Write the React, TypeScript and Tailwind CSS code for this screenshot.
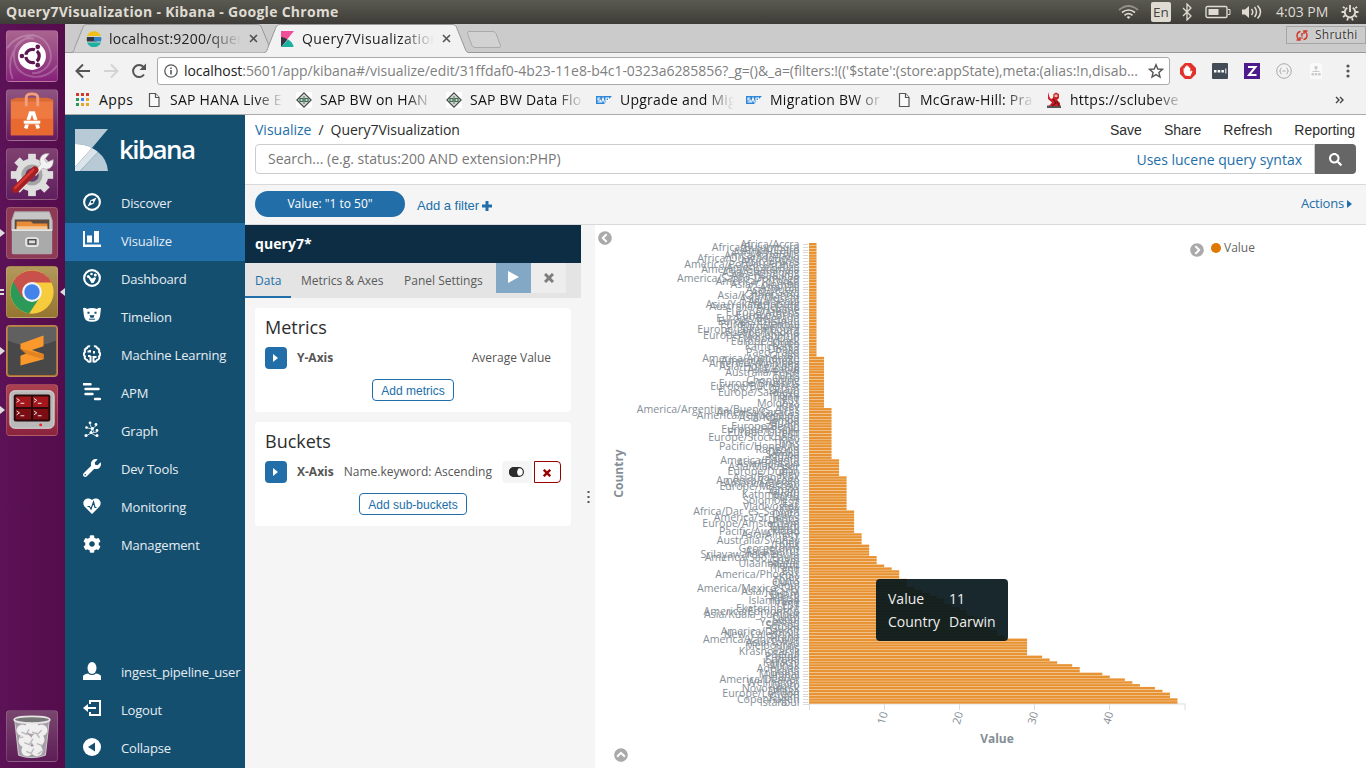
import React from "react";
import { FaChevronCircleLeft, FaChevronCircleRight, FaChevronCircleUp, FaCog, FaSearch, FaWrench } from "react-icons/fa";

/* ---------- chart data ---------- */

const runs: [number, number][] = [
  [1, 40], [2, 18], [3, 18], [4, 6], [5, 12], [6, 8], [7, 4], [8, 4], [9, 3], [10, 1], [11, 1], [12, 3],
  [13, 3], [14, 1], [15, 1], [16, 1], [17, 1], [18, 2], [19, 1], [20, 1], [21, 2], [22, 1], [23, 2], [24, 2], [25, 2], [26, 1],
  [29, 6], [31, 1], [32, 1], [33, 1], [35, 1], [36, 2], [39, 1], [40, 1], [42, 1], [43, 1], [44, 1], [46, 1], [47, 1], [48, 2], [49, 2],
];
const values = runs.flatMap(([v, n]) => Array<number>(n).fill(v));

const longNames: Record<number, string> = {
  0: "Africa/Accra", 1: "Africa/Bujumbura", 2: "Africa/Cairo", 3: "Africa/Harare", 4: "Africa/Kampala", 5: "Africa/Ouagadougou",
  6: "Africa/Tunis", 7: "America/Port-au-Prince", 8: "America/Belize", 9: "America/Guatemala", 10: "Asia/Chongqing", 11: "America/Lima",
  12: "America/Santo_Domingo", 13: "America/Toronto", 14: "Asia/Colombo", 15: "Asia/Dili", 16: "Asia/Dubai", 17: "Asia/Gaza",
  18: "Asia/Kathmandu", 19: "Asia/Muscat", 20: "Asia/Seoul", 21: "Asia/Yekaterinburg", 22: "Australia/Adelaide", 23: "Brisbane",
  24: "Europe/Athens", 25: "Europe/Brno", 26: "Europe/Belgrade", 27: "Europe/Chisinau", 28: "Europe/Istanbul", 29: "Europe/Kiev",
  30: "Europe/Luxembourg", 31: "Europe/Madrid", 32: "Europe/Mariehamn", 33: "Europe/Oslo", 34: "Europe/Minsk", 36: "Kamchatka",
  38: "Pago_Pago", 40: "America/Anchorage", 41: "America/Juneau", 42: "America/Winnipeg", 43: "Asia/Hong_Kong", 44: "Asia/Kabul",
  45: "Australia/Perth", 48: "Chongqing", 49: "Europe/Brussels", 50: "Europe/Bucharest", 52: "Europe/Sarajevo", 56: "Moldova",
  58: "America/Argentina/Buenos_Aires", 59: "America/Caracas", 60: "America/Tegucigalpa", 61: "Asia/Kolkata", 64: "Europe/Berlin",
  65: "Europe/Helsinki", 66: "Europe/Dublin", 68: "Europe/Stockholm", 71: "Pacific/Honolulu", 72: "Rangoon", 76: "America/Bogota",
  77: "Asia/Bahrain", 78: "Asia/Makassar", 80: "Europe/Dublin", 82: "Asia/Bangkok", 83: "America/Chicago", 84: "America/Belem",
  85: "Europe/Moscow", 88: "Kathmandu", 90: "Solomon_Is", 92: "Vladivostok", 94: "Africa/Dar_es_Salaam", 96: "America/St_Johns",
  98: "Europe/Amsterdam", 101: "Pacific/Auckland", 102: "Asia/Almaty", 104: "Australia/Sydney", 107: "Georgetown",
  108: "Asia/Beirut", 109: "Srilayawardenepura", 110: "America/Sao_Paulo", 112: "Ulaanbaatar", 116: "America/Phoenix",
  121: "America/Mexico_City", 122: "Asia/Jakarta", 125: "Islamabad", 128: "Ekaterinburg", 129: "America/Edmonton",
  130: "Asia/Kuala_Lumpur", 133: "Yerevan", 136: "America/Detroit", 137: "New_Caledonia", 139: "America/Vancouver",
  140: "Asia/Tokyo", 141: "Melbourne", 143: "Krasnoyarsk", 145: "Prague", 147: "Karachi", 149: "Adelaide", 151: "Mumbai",
  153: "America/Denver", 154: "Wellington", 156: "Novosibirsk", 158: "Europe/London", 160: "Copenhagen", 161: "Istanbul",
};
const shortNames = ["Seoul", "Dhaka", "Samoa", "Guam", "Minsk", "Perth", "Tirana", "EST", "Hanoi", "Kiev", "Tunis", "Quito"];
const labels = values.map((_, i) => longNames[i] ?? shortNames[i % shortNames.length]);

const TOP = 243;
const STEP = 461 / 162;
const LEFT = 809;
const UNIT = 7.52;

function Chart() {
  return (
    <svg className="block h-[543px] w-[595px]" viewBox="595 225 595 543" fontFamily="'Open Sans','Noto Sans',sans-serif">
      <g fill="#848e96" fontSize="10.600" textAnchor="end">
        {labels.map((l, i) => (
          <text key={i} x="799.5" y={TOP + (i + 0.5) * STEP + 3.4}>{l}</text>
        ))}
      </g>
      <g stroke="#d8d8d8" strokeWidth="1">
        {values.map((_, i) => (
          <line key={i} x1="803" x2="808" y1={Math.floor(TOP + (i + 0.5) * STEP) + 0.5} y2={Math.floor(TOP + (i + 0.5) * STEP) + 0.5} />
        ))}
      </g>
      <path d="M803 704.5h6M809.5 704v6M884.5 704v6M959.5 704v6M1034.5 704v6M1109.5 704v6M1185 704v6M809 704h376.500" fill="none" stroke="#ddd" />
      <g fill="#e58a22" fillOpacity="0.92">
        {values.map((v, i) => (
          <rect key={i} x={LEFT} y={TOP + i * STEP} width={v * UNIT} height={STEP - 0.35} />
        ))}
      </g>
      <g fill="#848e96" fontSize="11" textAnchor="middle">
        {[10, 20, 30, 40].map((n) => (
          <text key={n} transform={`translate(${LEFT + n * UNIT + 2} 719) rotate(-75)`}>{n}</text>
        ))}
      </g>
      <g fill="#848e96" fontSize="12" fontWeight="700" textAnchor="middle">
        <text x="997" y="743">Value</text>
        <text transform="translate(623 473.500) rotate(-90)">Country</text>
      </g>
    </svg>
  );
}

/* ---------- launcher ---------- */

function Tile({ bg, children, mark, active }: { bg: string; children: React.ReactNode; mark?: "one" | "two"; active?: boolean }) {
  return (
    <div className="flex h-[59px] w-[65px] items-center">
      <span className="flex w-[6px] flex-col gap-[2px]">
        {mark === "one" && <svg className="h-[8px] w-[5px]" viewBox="0 0 5 8"><path d="M0 0l5 4-5 4z" fill="#ddd" /></svg>}
        {mark === "two" && <><i className="h-[2px] w-[4px] bg-[#ddd]" /><i className="h-[2px] w-[4px] bg-[#ddd]" /></>}
      </span>
      <span className={`h-[52px] w-[52px] overflow-hidden rounded-[4px] border border-white/15 ${bg}`}>
        <svg viewBox="0 0 52 52" className="h-[50px] w-[50px]">{children}</svg>
      </span>
      <span className="flex flex-1 justify-end">
        {active && <svg className="h-[8px] w-[5px]" viewBox="0 0 5 8"><path d="M5 0L0 4l5 4z" fill="#ddd" /></svg>}
      </span>
    </div>
  );
}

function Launcher() {
  return (
    <aside className="flex w-[65px] flex-none flex-col justify-between bg-linear-to-r from-[#5c1256] to-[#540c4b] pt-[2px] pb-[3px]">
      <div>
        <Tile bg="bg-linear-to-b from-[#a9648f] to-[#87207a]">
          <g fill="none" stroke="#fff" strokeOpacity=".22" strokeWidth="2">
            <path d="M0 18C10 2 36-2 44 18c6 16-6 26-18 26M52 36C40 54 12 50 8 32 4 14 16 6 28 8M6 50C-2 30 8 10 28 4" />
          </g>
          <circle cx="26" cy="26" r="14.500" fill="#fff" />
          <circle cx="26.500" cy="26" r="7" fill="none" stroke="#5f1750" strokeWidth="3.400" strokeDasharray="12.200 2.460" strokeDashoffset="-8.500" />
          <g fill="#5f1750"><circle cx="15.500" cy="26" r="2.400" /><circle cx="32" cy="16.500" r="2.400" /><circle cx="32" cy="35.500" r="2.400" /></g>
        </Tile>
        <Tile bg="bg-linear-to-b from-[#8e5480] to-[#651a5b]">
          <path d="M4 10l6-2h32l6 2v4H4z" fill="#d96a35" />
          <path d="M4 12h44v35H4z" fill="#ee7a42" />
          <path d="M4 30h44v17H4z" fill="#e96a30" />
          <path d="M20 17V8q0-4 6-4t6 4v9" fill="none" stroke="#f0a07a" strokeWidth="3" />
          <path d="M19.500 40l5-16h3l5 16" fill="none" stroke="#fff" strokeWidth="3.800" />
          <rect x="17" y="31.500" width="18" height="4" rx="1.500" fill="#fff" stroke="#ea6c32" strokeWidth=".8" />
        </Tile>
        <Tile bg="bg-linear-to-b from-[#80406f] to-[#5f1e5e]">
          <g fill="#dedede">
            <circle cx="26" cy="27" r="17" />
            {[0, 45, 90, 135].map((a) => <rect key={a} x="22" y="5" width="8" height="44" transform={`rotate(${a} 26 27)`} />)}
          </g>
          <circle cx="26" cy="27" r="11" fill="#a5a5a5" /><circle cx="26" cy="27" r="7" fill="#6b3766" />
          <path d="M28 24l7-8c-3-6 2-13 9-11l-5 6 2 3 7-3c1 8-5 12-11 9l-7 8z" fill="#f2f2f2" stroke="#999" strokeWidth=".6" />
          <path d="M9 42l20-20" stroke="#a61e22" strokeWidth="7.500" strokeLinecap="round" />
          <path d="M8.500 40.500l19-19" stroke="#d63a37" strokeWidth="2.500" strokeLinecap="round" />
        </Tile>
        <Tile bg="bg-[#8d3a56]" mark="one">
          <path d="M8 4h36l3 9v10H5V13z" fill="#c6c6c6" stroke="#aaa" /><path d="M8 12h36v12H8z" fill="#5c4b42" />
          <path d="M10 14h15l2 2h15v8H10z" fill="#e98c38" /><path d="M10 19h32v4H10z" fill="#f6c58e" />
          <path d="M5 22h42v25q0 1-2 1H7q-2 0-2-1z" fill="#aaa" /><path d="M5 22h42v2H5z" fill="#e4e4e4" />
          <rect x="19.500" y="31" width="13" height="9" rx="2" fill="#ddd" stroke="#eee" /><rect x="22" y="33" width="8" height="4.500" fill="#ddd" stroke="#444" strokeWidth="1.400" />
        </Tile>
        <Tile bg="bg-linear-to-b from-[#b3985c] to-[#95752f]" mark="two" active>
          <circle cx="26" cy="26" r="22.500" fill="#f6cb3c" />
          <path d="M26 26L6.500 15A22.500 22.500 0 0 0 23 48.300l10-15z" fill="#2b9957" />
          <path d="M26 16h20.200A22.500 22.500 0 0 0 6.500 15L16 32z" fill="#c9514b" />
          <circle cx="26" cy="26" r="10.300" fill="#f3f3f3" /><circle cx="26" cy="26" r="8" fill="#4383ea" />
        </Tile>
        <Tile bg="bg-linear-to-b from-[#b5793d] to-[#ad7333]" mark="one">
          <rect x="1" y="1" width="50" height="50" rx="3" fill="#484848" /><path d="M1 1h50v14Q26 26 1 15z" fill="#606060" />
          <path d="M14 18.500l24-8.500v11l-12 4 12 4v5.500L14 41V31l10-4-10-3z" fill="#fb982c" />
          <path d="M14 24l24 5.500v5L20 29z" fill="#e08322" />
        </Tile>
        <Tile bg="bg-linear-to-b from-[#aa4150] to-[#8b233f]" mark="one">
          <rect x="3" y="6" width="46" height="39" rx="5" fill="#b9b9b9" stroke="#e0e0e0" /><rect x="7" y="10" width="38" height="28" rx="2" fill="#29090b" />
          <g fill="#a2161c"><path d="M9 12h16v11H9zM27 12h16v11H27z" /></g>
          <g fill="#7c0d12"><path d="M9 25h16v11H9zM27 25h16v11H27z" /></g>
          <g fill="none" stroke="#eee"><path d="M10 14l3 2-3 2m4 1h4M28 14l3 2-3 2m4 1h4M10 27l3 2-3 2m4 1h4M28 27l3 2-3 2m4 1h4" /></g>
          <circle cx="35" cy="41.500" r="1.500" fill="#e22" />
        </Tile>
      </div>
      <Tile bg="bg-linear-to-b from-[#79466f] to-[#5e1c57]">
        <path d="M8 9h36l-4 37q-14 5-28 0z" fill="#a79da6" stroke="#ccc" />
        <g fill="#efefef"><circle cx="16" cy="20" r="6" /><circle cx="26" cy="17" r="7" /><circle cx="36" cy="20" r="6" /><circle cx="19" cy="31" r="7" /><circle cx="32" cy="30" r="7" /><circle cx="21" cy="41" r="6" /><circle cx="31" cy="41" r="6" /></g>
        <path d="M15 22l5 2 3-5m3 3l6 2 4-4m-18 13l5 2 4-6m4 5l6 2m-17 6l5 2 3-5m4 6l4-3M13 28l4-1m14-3l3 4" fill="none" stroke="#b9b9b9" strokeWidth="1.400" />
        <ellipse cx="26" cy="9" rx="18.500" ry="3.500" fill="#777" stroke="#e5e5e5" strokeWidth="1.800" />
      </Tile>
    </aside>
  );
}

/* ---------- browser chrome ---------- */

function SystemBar() {
  return (
    <header className="flex h-6 flex-none items-center bg-linear-to-b from-[#5b5a51] to-[#3d3c38] pl-[6px] text-[#dfdbd2]">
      <span className="flex-1 pb-[2px] text-[14px] font-bold tracking-[0.290px]">Query7Visualization - Kibana - Google Chrome</span>
      <svg className="h-[18px] w-[21px]" viewBox="0 0 21 18" fill="none" stroke="#dfdbd2" strokeWidth="1.700"><path d="M1 7Q10.500-1 20 7" opacity=".45" /><path d="M4 9.500q6.500-5 13 0M6.500 12.300q4-3.200 8 0" /><path d="M8.500 14l2 2 2-2q-2-1.500-4 0z" fill="#dfdbd2" stroke="none" /></svg>
      <span className="ml-[12px] flex h-5 w-5 items-center justify-center rounded-[2px] bg-[#dfdbd2] text-[13.500px] text-[#45443f]">En</span>
      <svg className="ml-[10px] h-[18px] w-[12px]" viewBox="0 0 12 18" fill="none" stroke="#dfdbd2" strokeWidth="1.300"><path d="M2 5l8 8-4 4V1l4 4-8 8" /></svg>
      <svg className="ml-[12px] h-[14px] w-[26px]" viewBox="0 0 26 14"><rect x="1" y="1.500" width="21" height="11" rx="1.500" fill="none" stroke="#dfdbd2" strokeWidth="1.400" /><path d="M3.500 4h10v6h-10z" fill="#dfdbd2" /><path d="M23 4.500h2v5h-2" fill="none" stroke="#dfdbd2" /></svg>
      <svg className="ml-[10px] h-[18px] w-[21px]" viewBox="0 0 21 18" fill="none" stroke="#dfdbd2" strokeWidth="1.500"><path d="M1 6.500h3l4-3.500v12l-4-3.500H1z" fill="#dfdbd2" stroke="none" /><path d="M10.500 6q2.500 3 0 6M13.500 4q4 5 0 10M16.500 2.500q6 6.500 0 13" /></svg>
      <span className="ml-[14px] w-[54px] pb-px text-[14px] whitespace-nowrap">4:03 PM</span>
      <svg className="mr-[7px] ml-[11px] h-[18px] w-[18px]" viewBox="0 0 18 18" fill="none" stroke="#dfdbd2"><path d="M6.300 4.800a5.200 5.200 0 1 0 5.400 0M9 2v7" strokeWidth="1.900" /><path d="M3.800 5L1.800 4M3 9H.5M4 12.500l-2 1.500M7 15l-.8 2.500M11 15l.8 2.500M14 12.500l2 1.500M15 9h2.500M14.200 5l2-1" strokeWidth="1.800" /></svg>
    </header>
  );
}

function CloseX() {
  return <svg className="h-[9px] w-[9px]" viewBox="0 0 9 9"><path d="M1 1l7 7M8 1L1 8" stroke="#555" strokeWidth="1.600" /></svg>;
}

const fade = "overflow-hidden whitespace-nowrap [mask-image:linear-gradient(to_right,#000_75%,transparent_100%)]";

function TabStrip() {
  return (
    <div className="relative flex h-[29px] flex-none items-start bg-[#cbcbcb] text-[14px] text-[#222]">
      <svg className="absolute inset-0 h-[29px] w-[1301px]" viewBox="65 24 1301 29" fill="none" stroke="#999">
        <path d="M65 52.500H1366" />
        <path d="M71 52.500c3 0 3-3 4.500-7l7-17c1-3 2-4 5-4H257c3 0 4 1 5 4l7 17c1 4 2 7 5 7" fill="#d2d2d2" />
        <path d="M264 53c3-1 3-3 4.500-7l7-17.500c1-3 2-4 5-4H452c3 0 4 1 5 4l7 17.500c1.500 4 2 6 5 7" fill="#f2f2f2" />
        <path d="M469 31.500h24q2 0 3 2l4.500 12q.5 2-1.500 2h-24q-2 0-3-2l-4.500-12q-.5-2 1.500-2z" fill="#d2d2d2" stroke="#aaa" />
      </svg>
      <div className="relative flex h-[29px] items-center pl-[21px]">
        <svg className="h-4 w-4" viewBox="0 0 16 16"><path d="M1 5a7.500 7.500 0 0 1 14 0z" fill="#f0bf1a" /><path d="M1 6h9a2 2 0 0 1 0 4.500H1A8 8 0 0 1 1 6z" fill="#343741" /><path d="M8 6h7q1 2 0 4.500H8z" fill="#3185c4" /><path d="M1 11.500h14a7.500 7.500 0 0 1-14 0z" fill="#1db0a0" /></svg>
        <span className={`ml-[7px] w-[132px] tracking-[0.200px] ${fade}`}>localhost:9200/query7</span>
        <span className="ml-[8px]"><CloseX /></span>
      </div>
      <div className="relative flex h-[29px] items-center pl-[23px]">
        <svg className="h-4 w-[13px]" viewBox="0 0 13 16"><path d="M0 0h13L0 16z" fill="#f04e98" /><path d="M0 6q4 0 6.500 2.500L0 16z" fill="#343741" /><path d="M7 8.500Q12 11 12.500 16H0z" fill="#1db0a0" /></svg>
        <span className={`ml-[8px] w-[132px] tracking-[0.380px] ${fade}`}>Query7Visualization</span>
        <span className="ml-[8px]"><CloseX /></span>
      </div>
      <div className="relative mt-[2px] ml-auto flex h-[18px] w-[80px] items-center border border-[#a5a5a5] pl-[8px] text-[12px] text-[#333]">
        <svg className="h-[13px] w-[14px]" viewBox="0 0 14 13" fill="none" stroke="#d03b2c" strokeWidth="1.500"><path d="M5.500 2.500Q2 3 2 7q0 2 2 3.500M1.500 11H5V8M8.500 10.500Q12 10 12 6q0-2-2-3.500M12.500 2H9v3M7 4v3.500M7 8.500v1.300" /></svg>
        <span className="ml-[6px] tracking-[0.250px] [text-shadow:0_0_2px_#fff]">Shruthi</span>
      </div>
    </div>
  );
}

function Toolbar() {
  return (
    <div className="flex h-[35px] flex-none items-center bg-[#f2f2f2] text-[14px]">
      <svg className="ml-[9px] h-[18px] w-[18px]" viewBox="0 0 18 18" fill="none" stroke="#555" strokeWidth="2"><path d="M16 9H3M9 2.500L2.500 9 9 15.500" /></svg>
      <svg className="ml-[10px] h-[18px] w-[18px]" viewBox="0 0 18 18" fill="none" stroke="#d3d3d3" strokeWidth="2"><path d="M2 9h13M9 2.500L15.500 9 9 15.500" /></svg>
      <svg className="ml-[10px] h-[18px] w-[18px]" viewBox="0 0 18 18" fill="none" stroke="#555" strokeWidth="2"><path d="M14 12.500A6 6 0 1 1 13.500 5" /><path d="M16 1.500v6.500h-6.500z" fill="#555" stroke="none" /></svg>
      <div className="ml-[9px] flex h-[28px] w-[1013px] items-center rounded-[3px] border border-[#aaa] bg-white pl-[6px]">
        <svg className="h-[14px] w-[14px]" viewBox="0 0 14 14"><circle cx="7" cy="7" r="6.200" fill="none" stroke="#5a5a5a" strokeWidth="1.300" /><path d="M6.200 6h1.600v4.500H6.200zM6.200 3.400h1.600V5H6.200z" fill="#5a5a5a" /></svg>
        <span className="ml-[6px] w-[958px] pb-px tracking-[-0.045px] whitespace-nowrap text-[#808080]"><span className="text-[#222]">localhost</span>:5601/app/kibana#/visualize/edit/31ffdaf0-4b23-11e8-b4c1-0323a6285856?_g=()&amp;_a=(filters:!(('$state':(store:appState),meta:(alias:!n,disab...</span>
        <svg className="ml-[6px] h-4 w-4" viewBox="0 0 16 16"><path d="M8 1.700l1.800 4.300 4.700.4-3.600 3.100 1.100 4.600-4-2.500-4 2.500 1.100-4.600L1.500 6.400 6.200 6z" fill="none" stroke="#555" strokeWidth="1.400" /></svg>
      </div>
      <div className="ml-[10px] flex items-center gap-4">
        <svg className="h-4 w-4" viewBox="0 0 16 16"><path d="M5 0h6l5 5v6l-5 5H5l-5-5V5z" fill="#e0322a" /><path d="M5 12.500L3.600 9V5.200h1.300V3.500h1.400V2.500h1.400v1h1.400v1.300h1.200v4l1.300-1.300.9.700-2.200 5.100z" fill="#fff" /></svg>
        <svg className="h-4 w-4" viewBox="0 0 16 16"><rect width="16" height="16" rx="1" fill="#414c58" /><path d="M2 7h2.500v2.500H2zM5.700 7h2.500v2.500H5.700zM9.400 7h2.500v2.500H9.400zM13.300 5.500h1v5h-1z" fill="#fff" /></svg>
        <svg className="h-4 w-4" viewBox="0 0 16 16"><path d="M0 0h16v16H0z" fill="#4d1c8c" /><path d="M4 4h7.500L5 12h7.500" fill="none" stroke="#fff" strokeWidth="2" /></svg>
        <svg className="h-4 w-4" viewBox="0 0 16 16" fill="none" stroke="#aaa"><circle cx="8" cy="8" r="7.300" /><path d="M5.500 5q-1 0-1 1.500T3.500 8q1 0 1 1.500t1 1.500M10.500 5q1 0 1 1.500t1 1.500q-1 0-1 1.500t-1 1.500M6.500 8h3" /></svg>
        <svg className="h-4 w-4" viewBox="0 0 16 16"><rect x="2" width="12" height="16" rx="2" fill="#fafafa" /><path d="M6.500 3h3v3h-3zM3.500 10H6v2.500H3.500zM6.800 10h2.500v2.500H6.800zM10.200 10h2.500v2.500h-2.500zM4.500 8h7v1h-7zM7.500 6h1v2h-1z" fill="#ccc" /></svg>
        <svg className="h-4 w-4" viewBox="0 0 16 16" fill="#555"><circle cx="8" cy="3" r="1.600" /><circle cx="8" cy="8" r="1.600" /><circle cx="8" cy="13" r="1.600" /></svg>
      </div>
    </div>
  );
}

function DocIcon() {
  return <svg className="h-4 w-4" viewBox="0 0 16 16" fill="#fafafa" stroke="#555" strokeWidth="1.200"><path d="M3.500 1.500h6l3.500 4v9H3.500z" /><path d="M9.500 1.500v4H13" /></svg>;
}
function DiamondIcon() {
  return <svg className="h-4 w-4" viewBox="0 0 16 16"><rect width="16" height="16" fill="#fff" /><path d="M8 .8L15.200 8 8 15.200.8 8z" fill="#cfdad2" stroke="#444" strokeWidth="1.100" /><path d="M4 6.500h3v3H4zM9 6.500h3v3H9z" fill="none" stroke="#3c7050" strokeWidth="1.200" /><path d="M8 4v8" stroke="#666" /></svg>;
}
function SapIcon() {
  return <svg className="h-4 w-4" viewBox="0 0 16 16"><path d="M0 4h16l-8 8H0z" fill="#2c85d8" /><path d="M4.300 6H2v2h2.300v2H1.500M5.500 10.500L7 6l1.500 4.500M10 10.500V6h2.500v2.500H10" fill="none" stroke="#fff" strokeWidth="1.100" /></svg>;
}
function RedIcon() {
  return <svg className="h-4 w-4" viewBox="0 0 16 16"><path d="M1 13.500h14V16H1z" fill="#555" /><path d="M2 0l1.500 5L5 7l2-1 .5-4L10 .5 13 2v4l-2 2 3 3v3H3l3-3.500L2 7z" fill="#cb2027" /><path d="M7 7l3 4-4 3M11 9l2 5" fill="none" stroke="#6b1014" strokeWidth="1.100" /><path d="M8.500 2.500h3V5h-3z" fill="#e9c0b0" /></svg>;
}

const bookmarks: [React.ReactNode, string][] = [
  [<DocIcon />, "SAP HANA Live E"], [<DiamondIcon />, "SAP BW on HAN"], [<DiamondIcon />, "SAP BW Data Flo"],
  [<SapIcon />, "Upgrade and Mig"], [<SapIcon />, "Migration BW or"], [<DocIcon />, "McGraw-Hill: Pra"], [<RedIcon />, "https://sclubeve"],
];

function Bookmarks() {
  return (
    <div className="flex h-[27px] flex-none items-center border-b border-[#aaa] bg-[#f2f2f2] pb-[3px] text-[14px] text-[#111]">
      <svg className="ml-[11px] h-[13px] w-[13px]" viewBox="0 0 13 13"><path d="M0 0h3v3H0zM5 0h3v3H5zM10 0h3v3h-3z" fill="#d23a2c" /><path d="M0 5h3v3H0z" fill="#269a56" /><path d="M5 5h3v3H5z" fill="#4a86e8" /><path d="M10 5h3v3h-3zM10 10h3v3h-3zM5 10h3v3H5z" fill="#e5a72b" /><path d="M0 10h3v3H0z" fill="#269a56" /></svg>
      <span className="ml-[10px] w-[47px] tracking-[0.400px]">Apps</span>
      {bookmarks.map(([icon, t], i) => (
        <div key={i} className="flex w-[150px] items-center">
          {icon}
          <span className={`ml-[8px] w-[114px] tracking-[0.250px] ${fade}`}>{t}</span>
        </div>
      ))}
      <svg className="ml-[139px] h-[8px] w-[9px]" viewBox="0 0 9 8"><path d="M1 1l3 3-3 3M5 1l3 3-3 3" fill="none" stroke="#444" strokeWidth="1.400" /></svg>
    </div>
  );
}

/* ---------- kibana ---------- */

const s18 = "h-[18px] w-[18px]";
const navTop: [string, React.ReactNode][] = [
  ["Discover", <svg className={s18} viewBox="0 0 18 18"><circle cx="9" cy="9" r="7.900" fill="none" stroke="#fff" strokeWidth="2.100" /><path d="M13.500 4.500l-3 6.200-6 2.800 3-6.200z" fill="#fff" /><circle cx="9" cy="9" r="1.300" fill="#144f70" /></svg>],
  ["Visualize", <svg className={s18} viewBox="0 0 18 18" fill="#fff"><path d="M0 0h2v13.500h16v2.500H0zM4 4.500h5v7H4zM11 0h5v11.500h-5z" /></svg>],
  ["Dashboard", <svg className={s18} viewBox="0 0 18 18"><circle cx="9" cy="9" r="7.900" fill="none" stroke="#fff" strokeWidth="2.100" /><path d="M5 8l1.500-.5L9 9.500l3-1.500 1 1.500-2.500 4.500H8.500z" fill="#fff" /><circle cx="8.500" cy="5" r="1.300" fill="#fff" /><circle cx="12.300" cy="6" r="1.500" fill="#fff" /><circle cx="5.300" cy="7.500" r="1.500" fill="#fff" /></svg>],
  ["Timelion", <svg className={s18} viewBox="0 0 18 18"><path d="M0 1.200q2-1 4 .8 5-2 10 0Q16 .2 18 1.200l-1 8q-1 5.500-8 5.500T1 9.200z" fill="#fff" /><path d="M6.500 8.200h5l-1 2.500h-3zM4.500 4.700h2v2h-2zM11.500 4.700h2v2h-2z" fill="#144f70" /><path d="M6 12.200h6" stroke="#144f70" /></svg>],
  ["Machine Learning", <svg className={s18} viewBox="0 0 18 18" fill="none" stroke="#fff" strokeWidth="2"><path d="M7 1.500Q5 .5 4 3 1 4 2 7-.5 9 2 11.500 1 14 4 15q1 2.500 3.500 1.500V11M7 5v1.500H4.500M11 1.500q2-1 3 1.500 3 1 2 4 2.500 2 0 4.500 1 2.500-2 3.500-1 2.500-3.500 1.500V12h3M11 6v2.500M5 11h2.500" /></svg>],
  ["APM", <svg className={s18} viewBox="0 0 18 18" stroke="#fff" strokeWidth="2.400" strokeLinecap="round"><path d="M0.500 1.200h7M2.500 6h13M2.500 11h7M12 16h5" /></svg>],
  ["Graph", <svg className={s18} viewBox="0 0 18 18"><path d="M7 3l2 5 5-4M9 8L3 6.500M9 8l-1 4-5 3M8 12l6-1M8 12l6 3.500M9 8l2 3" fill="none" stroke="#fff" strokeWidth=".8" /><g fill="#fff"><circle cx="7" cy="1.800" r="1.400" /><circle cx="13" cy="3.500" r="1.400" /><circle cx="3.500" cy="6.500" r="1.300" /><circle cx="9.500" cy="7.500" r="1.500" /><circle cx="14" cy="9.500" r="1.400" /><circle cx="8" cy="11.500" r="1.500" /><circle cx="3" cy="14.500" r="1.500" /><circle cx="14" cy="14.500" r="1.500" /></g></svg>],
  ["Dev Tools", <FaWrench className={s18} color="#fff" />],
  ["Monitoring", <svg className={s18} viewBox="0 0 18 18"><path d="M9 17L1.500 9.500C-2 5 3-1.500 9 3c6-4.500 11 2 7.500 6.500z" fill="#fff" /><path d="M4.500 9.500h2L8 12l2.500-7 1.500 5.500h1.500" fill="none" stroke="#144f70" strokeWidth="1.200" /></svg>],
  ["Management", <FaCog className={s18} color="#fff" />],
];
const navBottom: [string, React.ReactNode][] = [
  ["ingest_pipeline_user", <svg className={s18} viewBox="0 0 18 18" fill="#fff"><ellipse cx="9" cy="6" rx="4.500" ry="6" /><path d="M0 18v-3.500q0-2 5-3 4 3 8 0 5 1 5 3V18z" /></svg>],
  ["Logout", <svg className={s18} viewBox="0 0 18 18" fill="none" stroke="#fff" strokeWidth="2"><path d="M7 4V1h10v14H7v-3M2 8h11" /><path d="M0 8l5-4v8z" fill="#fff" stroke="none" /></svg>],
  ["Collapse", <svg className={s18} viewBox="0 0 18 18"><circle cx="9" cy="9" r="9" fill="#fff" /><path d="M12 4.500v9L5 9z" fill="#144f70" /></svg>],
];

function NavItem({ item, active }: { item: [string, React.ReactNode]; active?: boolean }) {
  return (
    <div className={`flex h-[38px] items-center pl-[18px] ${active ? "bg-[#226ea9]" : ""}`}>
      <span className="-mt-[4px]">{item[1]}</span>
      <span className="ml-[20px] text-[13px] tracking-[-0.180px] whitespace-nowrap text-[#e6edf2]">{item[0]}</span>
    </div>
  );
}

function KibanaNav() {
  return (
    <nav className="flex w-[180px] flex-none flex-col bg-[#144f70]">
      <div className="flex h-[70px] items-center pl-[10px]">
        <svg className="h-[42px] w-[33px]" viewBox="0 0 33 42"><path d="M0 0h33L17 19Q10 15 0 15z" fill="#b8cad5" /><path d="M0 15q10 0 17 4L0 38z" fill="#fff" /><path d="M17 19L0 38v4h5L23 23q-2-2-6-4z" fill="#dae4ea" /><path d="M23 23L5 42h28q-1-12-10-19z" fill="#b8cad5" /></svg>
        <span className="-mt-[3px] ml-[11px] text-[26px] leading-none font-semibold tracking-[-1.600px] text-white">kibana</span>
      </div>
      {navTop.map((n) => <NavItem key={n[0]} item={n} active={n[0] === "Visualize"} />)}
      <div className="flex-1" />
      {navBottom.map((n) => <NavItem key={n[0]} item={n} />)}
    </nav>
  );
}

const arial = "font-['Liberation_Sans',Arial,sans-serif]";

function Cross({ className }: { className: string }) {
  return <svg className={className} viewBox="0 0 10 10" fill="none" stroke="currentColor" strokeWidth="3"><path d="M1 1l8 8M9 1L1 9" /></svg>;
}
function Caret() {
  return <svg className="h-[8px] w-[5px]" viewBox="0 0 5 8" fill="currentColor"><path d="M0 0l5 4-5 4z" /></svg>;
}

function Header() {
  return (
    <div className="h-[70px] flex-none border-b border-[#d9d9d9] bg-white pt-[4px] pl-[10px]">
      <div className="flex h-[25px] items-start pr-[11px] text-[14px] leading-[21px] text-[#2d2d2d]">
        <span className="text-[#226ea9]">Visualize</span><span className="mx-[7px]">/</span><span className="tracking-[-0.030px]">Query7Visualization</span>
        <span className={`ml-auto flex gap-[22px] pt-px ${arial}`}><span>Save</span><span>Share</span><span>Refresh</span><span>Reporting</span></span>
      </div>
      <div className="flex h-[30px] w-[1101px]">
        <div className="flex flex-1 items-center rounded-l-[4px] border border-[#ccc] pr-[12px] pl-[12px] text-[14px]">
          <span className="pb-px text-[#777]">Search... (e.g. status:200 AND extension:PHP)</span>
          <span className="ml-auto text-[#226ea9]">Uses lucene query syntax</span>
        </div>
        <div className="flex w-[41px] items-center justify-center rounded-r-[4px] bg-[#666]"><FaSearch size={13} color="#fff" /></div>
      </div>
    </div>
  );
}

function FilterBar() {
  return (
    <div className="flex h-[40px] flex-none items-center border-b border-[#d9d9d9] bg-[#f5f5f5] pb-px pl-[10px] text-[#226ea9]">
      <span className="flex h-[26px] w-[150px] items-center justify-center rounded-full bg-[#226ea9] pb-px text-[12px] text-white">Value: "1 to 50"</span>
      <span className={`mt-[3px] ml-[12px] flex items-center gap-[3px] text-[13px] ${arial}`}>Add a filter <svg className="h-[10px] w-[10px]" viewBox="0 0 10 10"><path d="M5 0v10M0 5h10" stroke="currentColor" strokeWidth="3" /></svg></span>
      <span className="mr-[14px] ml-auto flex items-center gap-[3px] text-[13px] tracking-[-0.180px]">Actions <Caret /></span>
    </div>
  );
}

function AggRow({ axis, children }: { axis: string; children: React.ReactNode }) {
  return (
    <div className="flex h-[22px] items-center text-[12px] text-[#555]">
      <span className="flex h-[22px] w-[22px] items-center justify-center rounded-[4px] bg-[#226ea9] pr-px text-white"><Caret /></span>
      <b className="ml-[10px]">{axis}</b>
      {children}
    </div>
  );
}

function Card({ title, add, children }: { title: string; add: string; children: React.ReactNode }) {
  return (
    <section className="mt-[10px] flex h-[104px] w-[316px] flex-col rounded-[4px] bg-white px-[10px]">
      <h3 className="mt-[5px] h-[34px] text-[18px] leading-[29px] text-[#2d2d2d]">{title}</h3>
      {children}
      <span className={`mt-[10px] flex h-[22px] items-center self-center rounded-[4px] border border-[#226ea9] px-[8px] pt-px text-[12px] text-[#226ea9] ${arial}`}>{add}</span>
    </section>
  );
}

function Editor() {
  return (
    <div className="flex w-[350px] flex-none bg-[#f5f5f5]">
      <div className="w-[336px]">
        <div className="flex h-[38px] items-center bg-[#0c2d44] pb-px pl-[10px] text-[14px] font-bold tracking-[0.050px] text-white">query7*</div>
        <div className="flex h-[35px] bg-[#e4e4e4] text-[12px] text-[#5a5a5a]">
          <span className="flex w-[46px] items-center border-b-2 border-[#226ea9] pt-[2px] pl-[10px] text-[#226ea9]">Data</span>
          <span className="flex w-[103px] items-center pl-[10px] whitespace-nowrap">Metrics &amp; Axes</span>
          <span className="flex w-[102px] items-center pl-[10px] whitespace-nowrap">Panel Settings</span>
          <span className="flex h-[30px] w-[35px] items-center justify-center bg-[#83a8c6] pb-[2px]"><svg className="h-[12px] w-[11px]" viewBox="0 0 11 12"><path d="M0 0l11 6-11 6z" fill="#fff" /></svg></span>
          <span className="flex h-[30px] w-[35px] items-center justify-center bg-[#ededed] pb-px text-[#7d7d7d]"><Cross className="h-[10px] w-[10px]" /></span>
        </div>
        <div className="pl-[10px]">
          <Card title="Metrics" add="Add metrics">
            <AggRow axis="Y-Axis"><span className="mr-[10px] ml-auto">Average Value</span></AggRow>
          </Card>
          <Card title="Buckets" add="Add sub-buckets">
            <AggRow axis="X-Axis">
              <span className="ml-[10px] whitespace-nowrap">Name.keyword: Ascending</span>
              <span className="ml-auto flex h-[22px] w-[30px] items-center justify-center rounded-l-[4px] bg-[#f5f5f5] pr-px"><svg className="h-[10px] w-[15px]" viewBox="0 0 15 10"><rect x=".6" y=".6" width="13.800" height="8.800" rx="4.400" fill="#fff" stroke="#2d2d2d" strokeWidth="1.200" /><path d="M5 0h6q-3 2-3 5t3 5H5Q0 9.500 0 5t5-5z" fill="#2d2d2d" /></svg></span>
              <span className="ml-[2px] flex h-[22px] w-[27px] items-center justify-center rounded-r-[4px] border border-[#990000] pt-px pr-px text-[#990000]"><Cross className="h-[8px] w-[8px]" /></span>
            </AggRow>
          </Card>
        </div>
      </div>
      <div className="flex w-[14px] items-center justify-center">
        <svg className="h-[12px] w-[3px]" viewBox="0 0 3 12" fill="#555"><path d="M.5 0h2v2h-2zM.5 5h2v2h-2zM.5 10h2v2h-2z" /></svg>
      </div>
    </div>
  );
}

export default function App() {
  return (
    <div className="flex h-[768px] w-[1366px] flex-col overflow-hidden bg-white font-['Open_Sans','Noto_Sans',sans-serif]">
      <SystemBar />
      <div className="flex min-h-0 flex-1">
        <Launcher />
        <div className="flex w-[1301px] flex-col">
          <TabStrip />
          <Toolbar />
          <Bookmarks />
          <div className="flex min-h-0 flex-1">
            <KibanaNav />
            <div className="flex flex-1 flex-col">
              <Header />
              <FilterBar />
              <div className="flex min-h-0 flex-1">
                <Editor />
                <div className="relative h-[543px] w-[595px] flex-none">
                  <Chart />
                  <FaChevronCircleLeft className="absolute top-[6px] left-[3px]" size={14} color="#aaa" />
                  <FaChevronCircleUp className="absolute top-[523px] left-[19px]" size={14} color="#aaa" />
                  <div className="absolute top-[354px] left-[281px] grid h-[62px] w-[132px] grid-cols-[61px_1fr] content-center gap-y-[1px] rounded-[4px] bg-[#04161a]/92 pl-[12px] text-[14px] leading-[22px] text-[#eee]">
                    <span>Value</span><span>11</span><span>Country</span><span>Darwin</span>
                  </div>
                </div>
                <div className="flex h-[50px] items-center text-[12px] text-[#666]">
                  <FaChevronCircleRight size={14} color="#aaa" />
                  <i className="mb-[5px] ml-[7px] h-[10px] w-[10px] rounded-full bg-[#e07800]" />
                  <span className="mb-[5px] ml-[3px]">Value</span>
                </div>
              </div>
            </div>
          </div>
        </div>
      </div>
    </div>
  );
}
